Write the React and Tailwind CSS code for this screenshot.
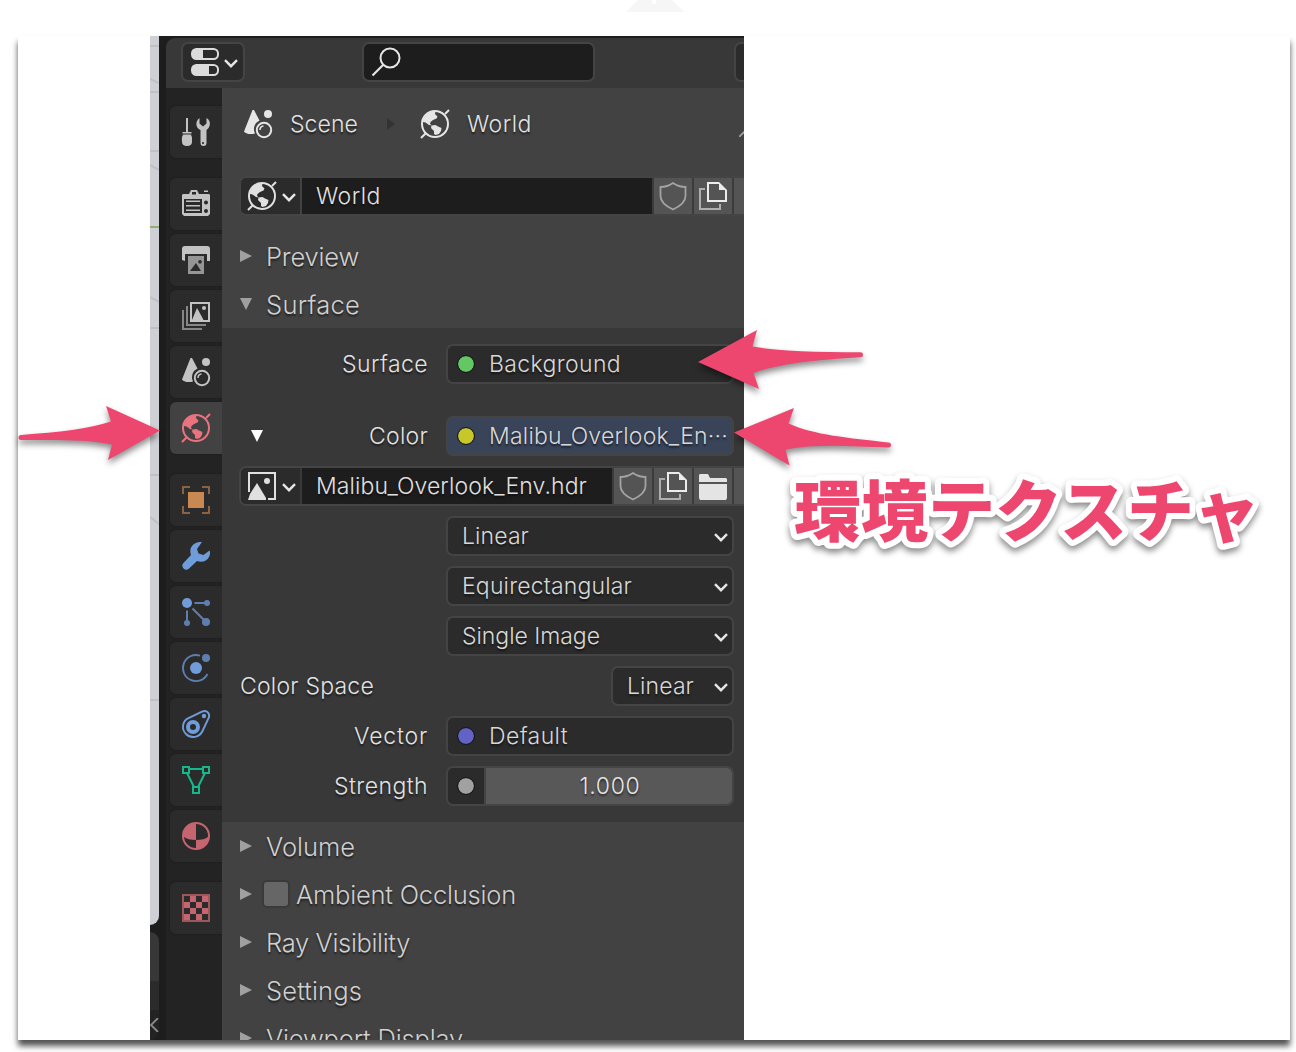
import React, { useLayoutEffect, useRef, useState } from 'react';
import clsx from 'clsx';

// Text that is tracked so it fills an exact width
const Fit = ({ w, className, children }) => {
  const ref = useRef(null);
  const [spacing, setSpacing] = useState(0);

  useLayoutEffect(() => {
    const natural = ref.current.getBoundingClientRect().width;
    setSpacing((w - natural) / children.length);
  }, [w, children]);

  return (
    <span
      ref={ref}
      className={clsx('inline-block shrink-0 whitespace-nowrap [text-shadow:0_2px_2px_rgba(0,0,0,0.55)]', className)}
      style={{ letterSpacing: spacing }}
    >
      {children}
    </span>
  );
};

const Icon = ({ children, className }) => (
  <svg viewBox="0 0 28 28" className={clsx('size-7 shrink-0 overflow-visible', className)} fill="currentColor">
    {children}
  </svg>
);

const WorldIcon = ({ className }) => (
  <Icon className={className}>
    <circle cx="14" cy="14" r="13" fill="none" stroke="currentColor" strokeWidth="2" />
    <path d="M24 4l4-4M0 28l4.500-4.500" stroke="currentColor" strokeWidth="2" />
    <path d="M2 9.500L5 5l4-3 5.500-1-.5 3 2.500 2.500-1 2-3.500 1.500L9.500 12 9 14l2 1.500-3-.5-3.500-2.500-2.500-.5z" />
    <path d="M10.500 15.500l4-.5 2.500 1.500 3.500 1.500-.5 3-2 3-3.500 1-1.500-1V21l-3-3z" />
  </Icon>
);

const SceneIcon = ({ className }) => (
  <Icon className={className}>
    <path d="M8.500 0h1.500L15.500 10.500a9.500 9.500 0 0 0-4.500 13C6 25 1 23.500 0 21.500z" />
    <circle cx="24" cy="4" r="4" />
    <circle cx="20" cy="20" r="7.200" fill="none" stroke="currentColor" strokeWidth="2" />
    <path d="M16 20a4 4 0 0 1 3.500-4" fill="none" stroke="currentColor" strokeWidth="1.500" />
  </Icon>
);

const ToolIcon = () => (
  <Icon>
    <path d="M4 0h2v14h3.500v2.500h-1c2 2 1.500 4 1.500 7.500 0 2.500-2 4-5 4s-5-1.500-5-4c0-3.500-.5-5.500 1.500-7.500H.5V14H4z" />
    <path d="M17.500 0v5.500l3.500 3 3.500-3V0c3 1.500 4 5 3 8-.5 2-2 3-3 4v13a3 3 0 0 1-6 0V12c-2-1-3.500-2.500-4-4.500-.5-3 .5-6 3-7.500z" />
    <path d="M0 16h10" stroke="#2b2b2b" strokeWidth="1" />
    <circle cx="21" cy="25" r="1.100" fill="#2b2b2b" />
  </Icon>
);

const RenderIcon = () => (
  <Icon>
    <path fillRule="evenodd" d="M1 4h6l2-4h6l2 4h10l1 1v19l-2 2H2l-2-2V5zM10 4.500h4V2h-4zM2 9v14h18V9zM24 10.500a2 2 0 1 0 .01 0zM24 19a2 2 0 1 0 .01 0z" />
    <path d="M22 .5h4V2h-4zM4 10.500h14V12H4zM4 15h14v1.500H4zM4 19.500h14V21H4z" />
  </Icon>
);

const OutputIcon = () => (
  <Icon>
    <path d="M3 0h22a3 3 0 0 1 3 3v12h-3V8H3v7l-3-1V3a3 3 0 0 1 3-3z" />
    <path fillRule="evenodd" className="opacity-70" d="M6 10h16v18H6zM8 25h11l-5-8zM18 14a1.800 1.800 0 1 0 .01 0z" />
  </Icon>
);

const ViewLayerIcon = () => (
  <Icon>
    <path d="M9 1h18v18H9z" fill="none" stroke="currentColor" strokeWidth="2" />
    <path d="M10 18l5-12 5 9 1.500 3z" />
    <circle cx="22" cy="6" r="2" />
    <path d="M5 4v19h19M1 8v19h19" fill="none" stroke="currentColor" strokeWidth="2" className="opacity-60" />
  </Icon>
);

const ObjectIcon = () => (
  <Icon>
    <path d="M6 6h16v16H6z" />
    <path d="M1 8V1h7M20 1h7v7M27 20v7h-7M8 27H1v-7" fill="none" stroke="currentColor" strokeWidth="2" className="opacity-60" />
  </Icon>
);

const WrenchIcon = () => (
  <Icon>
    <path d="M20 0c-5-.5-10 2-11.500 7-.5 2 0 4.500.5 6l-8 8.500a4 4 0 0 0 5.500 5.500l8.500-8c5 2 10 0 12-4 1-2 1.500-4.500.5-6.500l-6 4.500-5-1.500-1.500-4.500z" />
  </Icon>
);

const ParticlesIcon = () => (
  <Icon>
    <circle cx="5" cy="5" r="5" />
    <g className="opacity-75">
      <circle cx="25" cy="5" r="3" />
      <circle cx="5" cy="25" r="3" />
      <circle cx="24" cy="24" r="4" />
      <path d="M12.500 5H24M5 12.500V24M10.500 10.500L22 22" stroke="currentColor" strokeWidth="2" />
    </g>
  </Icon>
);

const PhysicsIcon = () => (
  <Icon>
    <circle cx="14" cy="14" r="6" />
    <circle cx="24" cy="4" r="4" className="opacity-75" />
    <path d="M18 1.700A13 13 0 1 0 25.500 20" fill="none" stroke="currentColor" strokeWidth="1.800" className="opacity-75" />
  </Icon>
);

const ConstraintsIcon = () => (
  <Icon>
    <path d="M6.500 8.200L20 1.600c4-2 8 1 7 5.500L20.500 21C17.500 27.500 9 29 4 24-1 19 .5 11 6.500 8.200z" fill="none" stroke="currentColor" strokeWidth="1.900" />
    <circle cx="11" cy="17" r="5" fill="none" stroke="currentColor" strokeWidth="4" />
    <circle cx="22" cy="6" r="2.200" />
  </Icon>
);

const DataIcon = () => (
  <Icon>
    <path d="M1 1h6v6H1zM21 1h6v6h-6zM11 21h6v6h-6zM7 3h14M5 7l7 14M23 7l-7 14" fill="none" stroke="currentColor" strokeWidth="2" />
  </Icon>
);

const MaterialIcon = () => (
  <Icon>
    <circle cx="14" cy="14" r="13" fill="none" stroke="currentColor" strokeWidth="2" />
    <path d="M14 1v17C9 18 4 17 1 14A13 13 0 0 1 14 1zM14 18c5 0 10-1 13-4a13 13 0 0 1-13 13z" />
  </Icon>
);

const TextureIcon = () => (
  <Icon>
    <path d="M1 1h26v26H1z" fill="none" stroke="currentColor" strokeWidth="2" className="opacity-75" />
    <path d="M8 2h6v6H8zM20 2h6v6h-6zM2 8h6v6H2zM14 8h6v6h-6zM8 14h6v6H8zM20 14h6v6h-6zM2 20h6v6H2zM14 20h6v6h-6z" />
  </Icon>
);

const ShieldIcon = () => (
  <Icon className="-ml-px text-[#a3a3a3]">
    <path d="M14 1c3.500 2.500 7.500 4 12.500 4v9c0 5.500-5 10-12.500 13.500C6.500 24 1.500 19.500 1.500 14V5C6.500 5 10.500 3.500 14 1z" fill="none" stroke="currentColor" strokeWidth="1.800" />
  </Icon>
);

const DuplicateIcon = () => (
  <Icon className="text-[#ececec]">
    <path d="M20 1H9v18h18V8" fill="none" stroke="currentColor" strokeWidth="2" />
    <path d="M20 0l8 8h-8z" />
    <path d="M6 7H1v20h20v-5" fill="none" stroke="currentColor" strokeWidth="2" className="opacity-60" />
  </Icon>
);

const FolderIcon = () => (
  <Icon className="text-[#e4e4e4]">
    <path d="M1 2h8l2 4h16l1 1v3H0V3zM0 12h28v14l-1 2H1l-1-2z" />
  </Icon>
);

const ImageIcon = () => (
  <Icon>
    <path d="M1 20V1h26v26h-7" fill="none" stroke="currentColor" strokeWidth="2" />
    <path d="M0 28l2-6 7-11 9 15v2z" />
    <circle cx="19" cy="9" r="3" />
  </Icon>
);

const EditorIcon = () => (
  <Icon>
    <rect x="1" y="1" width="26" height="10" rx="4.500" fill="none" stroke="currentColor" strokeWidth="2" />
    <rect x="1" y="17" width="26" height="10" rx="4.500" fill="none" stroke="currentColor" strokeWidth="2" />
    <path d="M5 1h7v10H5a4 4 0 0 1-4-4V5a4 4 0 0 1 4-4zM5 17h13v10H5a4 4 0 0 1-4-4v-2a4 4 0 0 1 4-4z" />
  </Icon>
);

const Chevron = () => (
  <svg viewBox="0 0 14 9" className="mt-[3px] h-[9px] w-[14px] shrink-0" fill="none" stroke="#e6e6e6" strokeWidth="2.400">
    <path d="M1 1.200l6 6 6-6" />
  </svg>
);

const Triangle = ({ open, className }) => (
  <svg viewBox="0 0 12 12" className={clsx('size-3 shrink-0', className)} fill="currentColor">
    <path d={open ? 'M0 0h12L6 12z' : 'M0 0l12 6-12 6z'} />
  </svg>
);

const tabs = [
  { icon: ToolIcon },
  { icon: RenderIcon, gap: true },
  { icon: OutputIcon },
  { icon: ViewLayerIcon },
  { icon: SceneIcon },
  { icon: WorldIcon, active: true, color: 'text-[#e9737f]' },
  { icon: ObjectIcon, gap: true, color: 'text-[#c98851]' },
  { icon: WrenchIcon, color: 'text-[#709cd9]' },
  { icon: ParticlesIcon, color: 'text-[#709cd9]' },
  { icon: PhysicsIcon, color: 'text-[#709cd9]' },
  { icon: ConstraintsIcon, color: 'text-[#709cd9]' },
  { icon: DataIcon, color: 'text-[#16b78a]' },
  { icon: MaterialIcon, color: 'text-[#c5656f]' },
  { icon: TextureIcon, gap: true, color: 'text-[#c5656f]' },
];

const TabBar = () => (
  <div className="flex w-14 shrink-0 flex-col gap-1 bg-[#232323] pt-[18px] pl-1">
    {tabs.map(({ icon: TabIcon, gap, active, color }, i) => (
      <div
        key={i}
        className={clsx(
          'flex size-[52px] shrink-0 items-center justify-center rounded-l-[6px] shadow-[0_0_2px_rgba(0,0,0,0.35)]',
          gap && 'mt-4',
          active ? 'bg-[#424242]' : 'bg-[#2b2b2b]',
          color || 'text-[#c3c3c3]'
        )}
      >
        <TabIcon />
      </div>
    ))}
  </div>
);

const Section = ({ title, w, open, checkbox }) => (
  <div className="flex h-12 shrink-0 items-center pl-[18px] text-[#d0d0d0]">
    <Triangle open={open} className="-mt-[2px] text-[#a0a0a0]" />
    {checkbox ? (
      <span className="mr-[6px] ml-[10px] -mt-[2px] size-7 rounded-[5px] border-2 border-[#3a3a3a] bg-[#666]" />
    ) : (
      <span className="w-[14px]" />
    )}
    <Fit w={w} className="text-[25.5px]">{title}</Fit>
  </div>
);

const Row = ({ label, w, arrow, children, className }) => (
  <div className={clsx('flex h-10 shrink-0 items-center', className)}>
    <div className="mr-[18px] flex w-[206px] items-center justify-end">
      {arrow && <Triangle open className="mr-auto ml-[29px] text-white" />}
      {label && <Fit w={w}>{label}</Fit>}
    </div>
    {children}
  </div>
);

const Field = ({ children, className }) => (
  <div className={clsx('flex h-10 w-[288px] items-center rounded-[7px] border-2 border-[#444] text-[#d8d8d8]', className || 'bg-[#2b2b2b]')}>
    {children}
  </div>
);

const Socket = ({ color }) => (
  <span className={clsx('ml-[10px] size-4 shrink-0 rounded-full outline outline-[#171717]', color)} />
);

const Select = ({ value, w, className }) => (
  <Field className={clsx('justify-between bg-[#2b2b2b] pr-1 pl-[14px]', className)}>
    <Fit w={w}>{value}</Fit>
    <Chevron />
  </Field>
);

const IdRow = ({ icon: TypeIcon, name, w, folder }) => (
  <div className="ml-[17px] flex h-10 shrink-0 rounded-l-[7px] border-y-2 border-l-2 border-[#444] text-[#e0e0e0]">
    <div className="flex w-[59px] items-center gap-[6px] rounded-l-[5px] bg-[#2b2b2b] pl-[7px]">
      <TypeIcon />
      <Chevron />
    </div>
    <div className="ml-[2px] flex flex-1 items-center bg-[#1d1d1d] pl-[14px]">
      <Fit w={w}>{name}</Fit>
    </div>
    <div className="flex gap-[2px] bg-[#3b3b3b] pl-[2px]">
      <div className="flex w-[38px] items-center justify-center bg-[#545454]"><ShieldIcon /></div>
      <div className="flex w-[38px] items-center justify-center bg-[#545454]"><DuplicateIcon /></div>
      {folder && <div className="flex w-[38px] items-center justify-center bg-[#545454]"><FolderIcon /></div>}
      <div className="w-[10px] bg-[#545454]" />
    </div>
  </div>
);

const Header = () => (
  <div className="flex h-[50px] shrink-0 bg-[#383838] pt-1 pl-[15px]">
    <div className="flex h-10 w-16 items-center gap-[5px] rounded-[7px] border-2 border-[#444] bg-[#2b2b2b] pl-[8px] text-[#dcdcdc]">
      <EditorIcon />
      <Chevron />
    </div>
    <div className="ml-[117px] flex h-10 w-[233px] items-center rounded-[7px] border-2 border-[#444] bg-[#1d1d1d] pl-[8px] text-[#e6e6e6]">
      <Icon>
        <circle cx="18" cy="10" r="9.500" fill="none" stroke="currentColor" strokeWidth="2" />
        <path d="M11 17L.5 27.500" stroke="currentColor" strokeWidth="2.200" />
      </Icon>
    </div>
    <div className="ml-[139px] h-10 flex-1 rounded-l-[7px] border-2 border-r-0 border-[#444] bg-[#2b2b2b]" />
  </div>
);

// Edge of the neighbouring 3D viewport and timeline
const ViewportEdge = () => (
  <div className="flex w-[9px] shrink-0 flex-col">
    <svg viewBox="0 0 9 889" className="h-[889px] w-[9px] rounded-br-[9px] bg-[#cfd0d5]" fill="none" stroke="#bfc0c4" strokeWidth="2">
      <path d="M0 10h9M0 43l9 4M0 56h9M0 115h9M0 129l9 5M0 261l9 5M0 292h9M0 439h9M0 481l9 7M0 664h9" />
      <path d="M0 191h9" stroke="#93ad78" />
    </svg>
    <div className="mt-[7px] h-[49px] rounded-tr-[9px] bg-[#373737]" />
    <div className="h-[29px] bg-[#2b2b2b]" />
    <div className="flex flex-1 items-center rounded-br-[9px] bg-[#232323]">
      <svg viewBox="0 0 9 14" className="h-[14px] w-[9px]" fill="none" stroke="#8a8a8a" strokeWidth="1.800">
        <path d="M8 0L1 7l7 7" />
      </svg>
    </div>
  </div>
);

const Arrow = ({ d, className }) => (
  <svg className={clsx('absolute overflow-visible [filter:drop-shadow(0_4px_3px_rgba(0,0,0,0.45))]', className)} fill="#ed466f">
    <path d={d} />
  </svg>
);

const App = () => {
  return (
    <div className="relative h-[1052px] w-[1296px] overflow-hidden bg-white font-['Inter','Noto_Sans_CJK_JP',sans-serif] text-[23px] leading-none font-[350] text-[#e2e2e2]">
      <svg viewBox="0 0 58 12" className="absolute top-0 left-[626px] h-3 w-[58px]">
        <path d="M0 12L12 0h34l12 12z" fill="#f6f6f6" />
        <path d="M26 0h4v4h-4z" fill="#fff" />
      </svg>

      <div className="mt-9 ml-[18px] h-[1004px] w-[1272px] bg-white pl-[132px] shadow-[0_6px_6px_rgba(0,0,0,0.68)]">
        <div className="flex h-full w-[594px] overflow-hidden bg-[#1d1d1d]">
          <ViewportEdge />
          <div className="mt-[2px] ml-[7px] flex w-[578px] flex-col overflow-hidden rounded-tl-[9px]">
            <Header />
            <div className="flex min-h-0 flex-1">
              <TabBar />
              <div className="flex w-[522px] flex-col overflow-hidden bg-[#424242]">
                <div className="flex h-[72px] shrink-0 items-center pl-[22px]">
                  <SceneIcon className="text-[#e6e6e6]" />
                  <Fit w={68} className="ml-[18px]">Scene</Fit>
                  <svg viewBox="0 0 8 12" className="ml-[29px] h-3 w-2" fill="#333"><path d="M0 0l8 6-8 6z" /></svg>
                  <WorldIcon className="ml-[26px] text-[#e6e6e6]" />
                  <Fit w={65} className="ml-[18px]">World</Fit>
                  <svg viewBox="0 0 5 6" className="mt-5 ml-auto h-[6px] w-[5px]" stroke="#a0a0a0" strokeWidth="1.800"><path d="M0 6l6-6" /></svg>
                </div>
                <div className="h-4 shrink-0" />
                <IdRow icon={WorldIcon} name="World" w={65} />
                <div className="h-[17px] shrink-0" />
                <Section title="Preview" w={93} />
                <Section title="Surface" w={94} open />

                <div className="-mt-px flex h-[494px] shrink-0 flex-col gap-[10px] bg-[#383838] pt-4">
                  <Row label="Surface" w={86}>
                    <Field>
                      <Socket color="bg-[#63c763]" />
                      <Fit w={132} className="ml-[15px]">Background</Fit>
                    </Field>
                  </Row>
                  <Row label="Color" w={59} arrow className="mt-[22px]">
                    <Field className="bg-[#394459]">
                      <Socket color="bg-[#c7c729]" />
                      <Fit w={239} className="ml-[15px]">Malibu_Overlook_En···</Fit>
                    </Field>
                  </Row>
                  <IdRow icon={ImageIcon} name="Malibu_Overlook_Env.hdr" w={271} folder />
                  <Row><Select value="Linear" w={67} /></Row>
                  <Row><Select value="Equirectangular" w={170} /></Row>
                  <Row><Select value="Single Image" w={138} /></Row>
                  <div className="flex h-10 shrink-0 items-center justify-between pr-[10px] pl-[18px]">
                    <Fit w={134}>Color Space</Fit>
                    <Select value="Linear" w={67} className="max-w-[123px]" />
                  </div>
                  <Row label="Vector" w={74}>
                    <Field>
                      <Socket color="bg-[#6363c7]" />
                      <Fit w={79} className="ml-[15px]">Default</Fit>
                    </Field>
                  </Row>
                  <Row label="Strength" w={94}>
                    <Field className="overflow-hidden bg-[#2b2b2b]">
                      <Socket color="bg-[#a1a1a1]" />
                      <div className="ml-[10px] flex h-full flex-1 items-center justify-center border-l-2 border-[#444] bg-[#585858] pl-[2px] text-[#e6e6e6]">
                        <Fit w={61}>1.000</Fit>
                      </div>
                    </Field>
                  </Row>
                </div>

                <div className="pt-px">
                  <Section title="Volume" w={89} />
                  <Section title="Ambient Occlusion" w={220} checkbox />
                  <Section title="Ray Visibility" w={144} />
                  <Section title="Settings" w={96} />
                  <Section title="Viewport Display" w={197} />
                </div>
              </div>
            </div>
          </div>
        </div>
      </div>

      {/* hide the frame shadow above its soft top corners */}
      <div className="absolute top-[30px] left-0 h-[7px] w-[18px] bg-white" />
      <div className="absolute top-[30px] left-[1290px] h-[7px] w-[6px] bg-white" />

      <Arrow
        className="top-[330px] left-[698px] h-[60px] w-[165px]"
        d="M0 32L59 0l-4.500 16.500C83 21.500 120 22 162.500 22.300a2.400 2.400 0 0 1 0 5C120 30 83 33 55.500 43L61 59z"
      />
      <Arrow
        className="top-[408px] left-[734px] h-[58px] w-[157px]"
        d="M0 24.500L60 0l-5.500 15.500C80 27 115 30 154.500 34.500a2.400 2.400 0 0 1 0 5C115 38.500 85 35 51.500 41.500L55.500 57.500z"
      />
      <Arrow
        className="top-[406px] left-[19px] h-[54px] w-[142px]"
        d="M141 24.500L87 0l5 15.500C70 23 40 26 2 29a2.400 2.400 0 0 0 0 5c38 0 65-1 91 4.500L89 54z"
      />
      <svg className="absolute top-[470px] left-[785px] h-[90px] w-[490px] overflow-visible [filter:drop-shadow(0_4px_3px_rgba(0,0,0,0.45))]">
        <text
          x="9"
          y="66"
          fill="#ed466f"
          stroke="#fff"
          strokeWidth="12"
          strokeLinejoin="round"
          paintOrder="stroke"
          className="font-['Noto_Sans_CJK_JP',sans-serif] text-[67px] font-black"
        >
          環境テクスチャ
        </text>
      </svg>
    </div>
  );
};

export default App;
